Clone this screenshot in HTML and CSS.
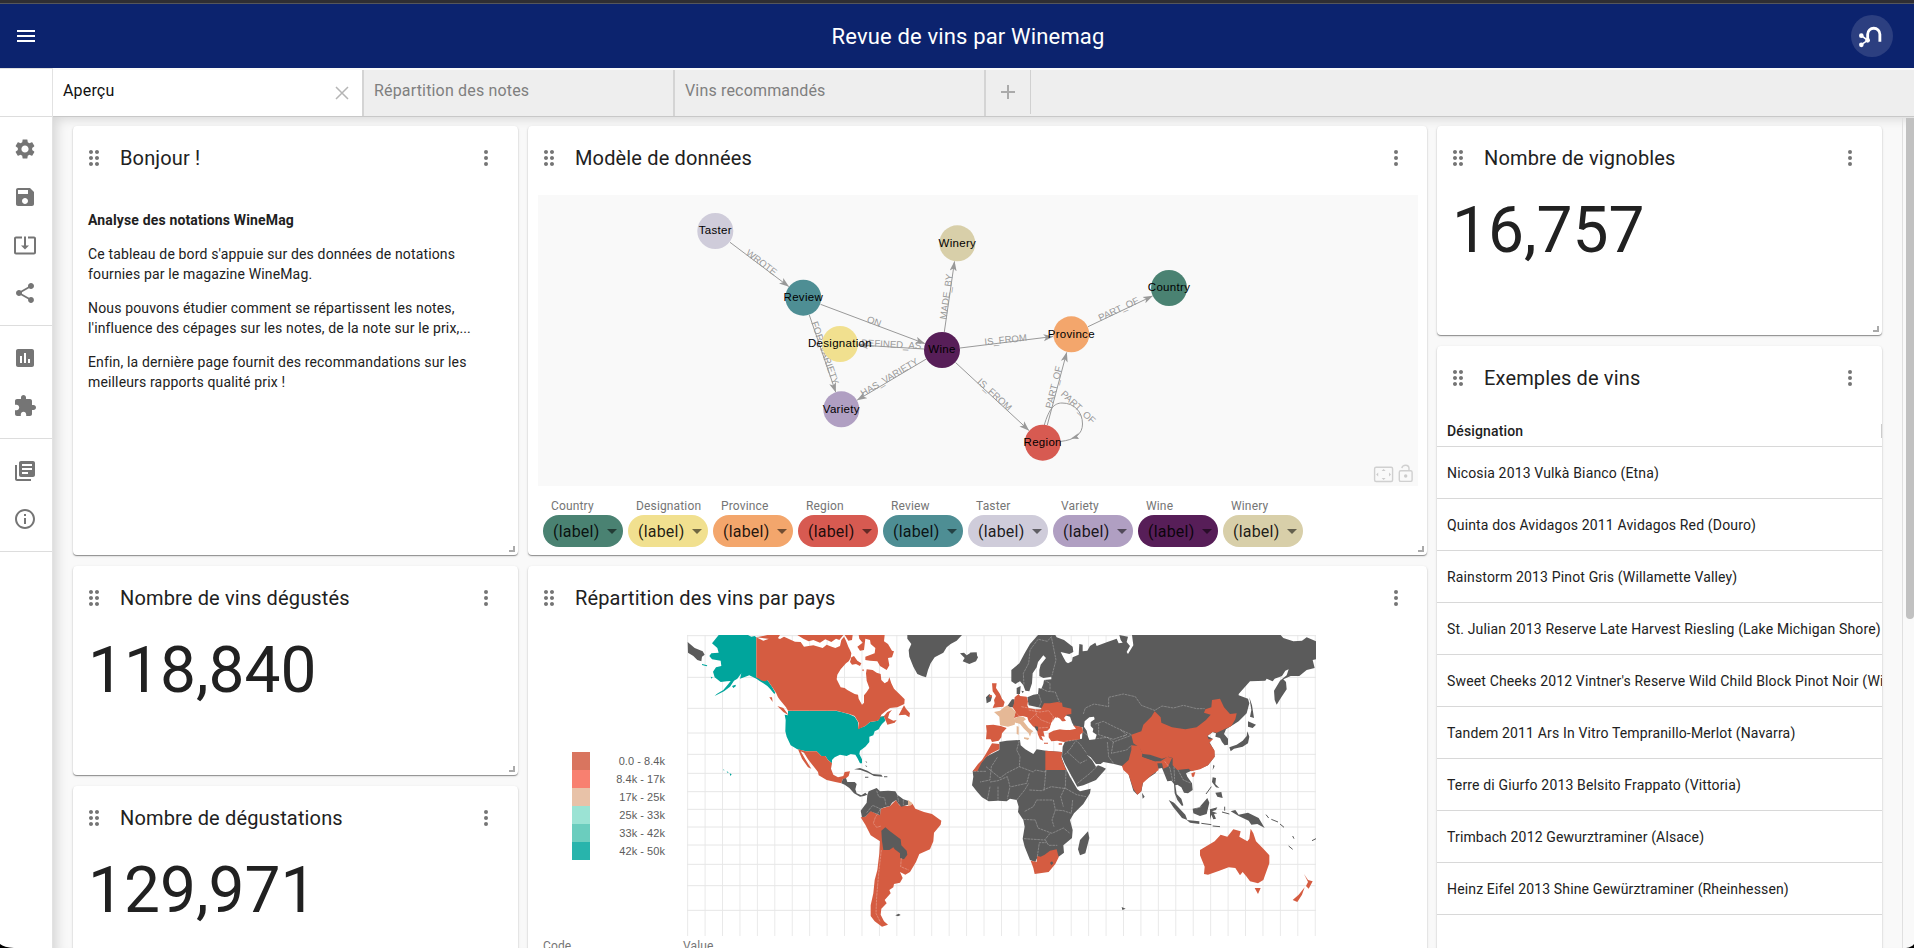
FILE: index.html
```html
<!DOCTYPE html>
<html lang="fr">
<head>
<meta charset="utf-8">
<title>Revue de vins par Winemag</title>
<link rel="stylesheet" href="styles.css">
</head>
<body>
<svg class="defs" width="0" height="0">
  <symbol id="drag" viewBox="0 0 24 24"><path d="M11 18c0 1.1-.9 2-2 2s-2-.9-2-2 .9-2 2-2 2 .9 2 2zm-2-8c-1.100 0-2 .9-2 2s.9 2 2 2 2-.9 2-2-.9-2-2-2zm0-6c-1.100 0-2 .9-2 2s.9 2 2 2 2-.9 2-2-.9-2-2-2zm6 4c1.100 0 2-.9 2-2s-.9-2-2-2-2 .9-2 2 .9 2 2 2zm0 2c-1.100 0-2 .9-2 2s.9 2 2 2 2-.9 2-2-.9-2-2-2zm0 6c-1.100 0-2 .9-2 2s.9 2 2 2 2-.9 2-2-.9-2-2-2z"/></symbol>
  <symbol id="more" viewBox="0 0 24 24"><circle cx="12" cy="6" r="2"/><circle cx="12" cy="12" r="2"/><circle cx="12" cy="18" r="2"/></symbol>
  <symbol id="caret" viewBox="0 0 24 24"><path d="M7 10l5 5 5-5z"/></symbol>
</svg>
<div class="window-edge"></div>
<header class="topbar">
  <svg class="burger" viewBox="0 0 24 24"><path d="M3 18h18v-2H3v2zm0-5h18v-2H3v2zm0-7v2h18V6H3z"/></svg>
  <h1 class="topbar-title">Revue de vins par Winemag</h1>
  <span class="logo"><svg viewBox="1293 45 126 126"><g fill="none" stroke="#fff"><path stroke-width="8.500" d="M1343 120V103a18.300 18.300 0 0 1 36.600 0V125"/><path stroke-width="5" d="M1324 107L1343 121L1324 134"/></g><g fill="#fff"><circle cx="1324" cy="107" r="7"/><circle cx="1343" cy="121" r="7"/><circle cx="1324" cy="134.500" r="7"/></g></svg></span>
</header>
<div class="shell">
  <aside class="side">
    <div class="side-head"></div>
    <nav class="side-group">
      <a class="side-btn"><svg viewBox="0 0 24 24"><path d="M19.140 12.940c.04-.3.060-.61.060-.94 0-.32-.02-.64-.07-.94l2.030-1.580c.18-.14.230-.41.120-.61l-1.920-3.320c-.12-.22-.37-.29-.59-.22l-2.390.96c-.5-.38-1.030-.7-1.620-.94l-.36-2.540c-.04-.24-.24-.41-.48-.41h-3.840c-.24 0-.43.170-.47.410l-.36 2.540c-.59.240-1.130.570-1.620.940l-2.390-.96c-.22-.08-.47 0-.59.220L2.740 8.870c-.12.210-.08.470.120.610l2.030 1.580c-.05.3-.09.630-.09.940s.02.640.070.940l-2.030 1.580c-.18.140-.23.410-.12.610l1.920 3.320c.12.220.370.290.590.220l2.390-.96c.5.380 1.030.7 1.620.940l.36 2.540c.05.240.240.410.480.410h3.840c.24 0 .44-.17.470-.41l.36-2.540c.59-.24 1.130-.56 1.620-.94l2.390.96c.22.080.470 0 .59-.22l1.920-3.320c.12-.22.070-.47-.12-.61l-2.010-1.580zM12 15.600c-1.980 0-3.600-1.620-3.600-3.600s1.620-3.600 3.600-3.600 3.600 1.620 3.600 3.600-1.620 3.600-3.600 3.600z"/></svg></a>
      <a class="side-btn"><svg viewBox="0 0 24 24"><path d="M17 3H5c-1.110 0-2 .9-2 2v14c0 1.100.890 2 2 2h14c1.100 0 2-.9 2-2V7l-4-4zm-5 16c-1.660 0-3-1.340-3-3s1.340-3 3-3 3 1.340 3 3-1.340 3-3 3zm3-10H5V5h10v4z"/></svg></a>
      <a class="side-btn"><svg viewBox="0 0 24 24"><path d="M12 16.500l4-4h-3v-9h-2v9H8l4 4zm9-13h-6v1.990h6v14.030H3V5.490h6V3.500H3c-1.100 0-2 .9-2 2v14c0 1.100.9 2 2 2h18c1.100 0 2-.9 2-2v-14c0-1.100-.9-2-2-2z"/></svg></a>
      <a class="side-btn"><svg viewBox="0 0 24 24"><path d="M18 16.080c-.76 0-1.440.3-1.960.770L8.910 12.700c.05-.23.090-.46.090-.7s-.04-.47-.09-.7l7.050-4.110c.54.5 1.250.810 2.040.810 1.660 0 3-1.340 3-3s-1.340-3-3-3-3 1.340-3 3c0 .24.040.470.090.7L8.040 9.810C7.500 9.310 6.790 9 6 9c-1.660 0-3 1.340-3 3s1.340 3 3 3c.79 0 1.500-.31 2.040-.81l7.120 4.160c-.05.210-.08.430-.08.650 0 1.610 1.310 2.920 2.920 2.920s2.920-1.310 2.920-2.920-1.310-2.920-2.920-2.920z"/></svg></a>
    </nav>
    <nav class="side-group">
      <a class="side-btn"><svg viewBox="0 0 24 24"><path d="M19 3H5c-1.100 0-2 .9-2 2v14c0 1.100.9 2 2 2h14c1.100 0 2-.9 2-2V5c0-1.100-.9-2-2-2zM9 17H7v-7h2v7zm4 0h-2V7h2v10zm4 0h-2v-4h2v4z"/></svg></a>
      <a class="side-btn"><svg viewBox="0 0 24 24"><path d="M20.500 11H19V7c0-1.100-.9-2-2-2h-4V3.500C13 2.120 11.880 1 10.500 1S8 2.120 8 3.500V5H4c-1.100 0-1.990.9-1.990 2v3.800H3.500c1.490 0 2.700 1.210 2.700 2.700s-1.210 2.700-2.700 2.700H2V20c0 1.100.9 2 2 2h3.800v-1.500c0-1.490 1.210-2.700 2.700-2.700 1.490 0 2.700 1.210 2.700 2.700V22H17c1.100 0 2-.9 2-2v-4h1.500c1.380 0 2.500-1.120 2.500-2.500S21.880 11 20.500 11z"/></svg></a>
    </nav>
    <nav class="side-group">
      <a class="side-btn"><svg viewBox="0 0 24 24"><path d="M4 6H2v14c0 1.100.9 2 2 2h14v-2H4V6zm16-4H8c-1.100 0-2 .9-2 2v12c0 1.100.9 2 2 2h12c1.100 0 2-.9 2-2V4c0-1.100-.9-2-2-2zm-1 9H9V9h10v2zm-4 4H9v-2h6v2zm4-8H9V5h10v2z"/></svg></a>
      <a class="side-btn"><svg viewBox="0 0 24 24"><path d="M11 7h2v2h-2zm0 4h2v6h-2zm1-9C6.480 2 2 6.480 2 12s4.480 10 10 10 10-4.480 10-10S17.520 2 12 2zm0 18c-4.410 0-8-3.590-8-8s3.590-8 8-8 8 3.590 8 8-3.590 8-8 8z"/></svg></a>
    </nav>
  </aside>
  <div class="main">
    <div class="tabs">
      <div class="tab tab-active"><span>Aperçu</span><svg class="tab-close" viewBox="0 0 14 14"><path d="M1 1L13 13M13 1L1 13"/></svg></div>
      <div class="tab"><span>Répartition des notes</span></div>
      <div class="tab"><span>Vins recommandés</span></div>
      <div class="tab-add"><svg viewBox="0 0 14 14"><path d="M7 0V14M0 7H14"/></svg></div>
    </div>
    <div class="page">
      <main class="board">
        <section class="card rows-2">
          <div class="card-head"><svg class="drag"><use href="#drag"/></svg><h2>Bonjour !</h2><svg class="more"><use href="#more"/></svg></div>
          <div class="prose">
            <p><strong>Analyse des notations WineMag</strong></p>
            <p>Ce tableau de bord s'appuie sur des données de notations<br>fournies par le magazine WineMag.</p>
            <p>Nous pouvons étudier comment se répartissent les notes,<br>l'influence des cépages sur les notes, de la note sur le prix,...</p>
            <p>Enfin, la dernière page fournit des recommandations sur les<br>meilleurs rapports qualité prix !</p>
          </div>
          <i class="grip"></i>
        </section>
        <section class="card rows-2 col-mid">
          <div class="card-head"><svg class="drag"><use href="#drag"/></svg><h2>Modèle de données</h2><svg class="more"><use href="#more"/></svg></div>
          <svg class="graph" viewBox="538 195 880 291">
            <defs><marker id="tip" viewBox="0 0 10 8" refX="9.500" refY="4" markerWidth="10" markerHeight="8" markerUnits="userSpaceOnUse" orient="auto"><path d="M0 .5L10 4L0 7.500L2.500 4Z" fill="#999"/></marker></defs>
            <g class="edges">
              <path marker-end="url(#tip)" d="M730 242.300L788.700 286.500"/>
              <path marker-end="url(#tip)" d="M820.500 304.300L924.700 343.500"/>
              <path marker-end="url(#tip)" d="M809.300 315L835.700 392"/>
              <path marker-end="url(#tip)" d="M924 349L858.500 345"/>
              <path marker-end="url(#tip)" d="M926.300 359L857.300 400"/>
              <path marker-end="url(#tip)" d="M944.300 332L954.500 261.500"/>
              <path marker-end="url(#tip)" d="M960 348L1053 336.500"/>
              <path marker-end="url(#tip)" d="M955.500 362.500L1028.800 430.300"/>
              <path marker-end="url(#tip)" d="M1047.300 425L1066.700 352.500"/>
              <path marker-end="url(#tip)" d="M1088 326.700L1152.500 296"/>
              <path d="M1044.300 425C1049 409 1054 403 1062 403C1074 403 1082.500 411.500 1082.500 424C1082.500 434 1075 440 1060 441.500"/>
            </g>
            <path d="M1071 438.500L1079.300 432.500L1076.800 436L1079 439Z" fill="#999"/>
            <g class="edge-labels">
              <text transform="translate(759.500 265) rotate(37)">WROTE</text>
              <text transform="translate(873 324.500) rotate(20)">ON</text>
              <text transform="translate(822 354) rotate(71)">FOR_VARIETY</text>
              <text transform="translate(891 347.500) rotate(3)">DEFINED_AS</text>
              <text transform="translate(891 380) rotate(-31)">HAS_VARIETY</text>
              <text transform="translate(949.500 297) rotate(-82)">MADE_BY</text>
              <text transform="translate(1006 343) rotate(-6)">IS_FROM</text>
              <text transform="translate(992.500 397) rotate(42.500)">IS_FROM</text>
              <text transform="translate(1057 388) rotate(-76)">PART_OF</text>
              <text transform="translate(1120 312) rotate(-25)">PART_OF</text>
              <text transform="translate(1076 409.500) rotate(43)">PART_OF</text>
            </g>
            <circle cx="715.300" cy="231" r="18" fill="#cfccda"/>
            <circle cx="803.300" cy="297.700" r="18" fill="#4e8e94"/>
            <circle cx="840" cy="344" r="18" fill="#f1e08f"/>
            <circle cx="841.300" cy="409.300" r="18" fill="#b09fc2"/>
            <circle cx="942" cy="350" r="18" fill="#571e58"/>
            <circle cx="957.300" cy="243.300" r="18" fill="#d8cfa9"/>
            <circle cx="1071.300" cy="334.300" r="18" fill="#f3a66c"/>
            <circle cx="1169" cy="288" r="18" fill="#4a8272"/>
            <circle cx="1042.700" cy="442.700" r="18" fill="#d75a51"/>
            <g class="node-labels">
              <text x="715.300" y="234.300">Taster</text>
              <text x="803.300" y="301.200">Review</text>
              <text x="840" y="347.300">Designation</text>
              <text x="841.300" y="413">Variety</text>
              <text x="942" y="353.300">Wine</text>
              <text x="957.300" y="247.200">Winery</text>
              <text x="1071.300" y="338.300">Province</text>
              <text x="1169" y="291.200">Country</text>
              <text x="1042.700" y="446.300">Region</text>
            </g>
            <g class="graph-tools">
              <rect x="1374.600" y="467.200" width="18" height="14.300" rx="1.500"/>
              <rect x="1399.300" y="470.800" width="12.800" height="10.600" rx="1.500"/>
              <path d="M1401.800 468.200C1402.500 464.300 1409 464 1409 468.500V470.500"/>
              <path class="solid" d="M1383.600 469l2 2h-4zM1383.600 480l2-2h-4zM1376.200 474.400l2-2v4zM1391 474.400l-2-2v4z"/>
              <circle class="solid" cx="1405.700" cy="476" r="1.700"/>
            </g>
          </svg>
          <div class="chips">
            <div class="chip-field"><label>Country</label><span class="chip chip-country">(label)<svg><use href="#caret"/></svg></span></div>
            <div class="chip-field"><label>Designation</label><span class="chip chip-designation">(label)<svg><use href="#caret"/></svg></span></div>
            <div class="chip-field"><label>Province</label><span class="chip chip-province">(label)<svg><use href="#caret"/></svg></span></div>
            <div class="chip-field"><label>Region</label><span class="chip chip-region">(label)<svg><use href="#caret"/></svg></span></div>
            <div class="chip-field"><label>Review</label><span class="chip chip-review">(label)<svg><use href="#caret"/></svg></span></div>
            <div class="chip-field"><label>Taster</label><span class="chip chip-taster">(label)<svg><use href="#caret"/></svg></span></div>
            <div class="chip-field"><label>Variety</label><span class="chip chip-variety">(label)<svg><use href="#caret"/></svg></span></div>
            <div class="chip-field"><label>Wine</label><span class="chip chip-wine">(label)<svg><use href="#caret"/></svg></span></div>
            <div class="chip-field"><label>Winery</label><span class="chip chip-winery">(label)<svg><use href="#caret"/></svg></span></div>
          </div>
          <i class="grip"></i>
        </section>
        <section class="card">
          <div class="card-head"><svg class="drag"><use href="#drag"/></svg><h2>Nombre de vignobles</h2><svg class="more"><use href="#more"/></svg></div>
          <div class="figure">16,757</div>
          <i class="grip"></i>
        </section>
        <section class="card rows-4 col-right">
          <div class="card-head"><svg class="drag"><use href="#drag"/></svg><h2>Exemples de vins</h2><svg class="more"><use href="#more"/></svg></div>
          <div class="table">
            <div class="tr th"><span>Désignation</span><i></i></div>
            <div class="tr">Nicosia 2013 Vulkà Bianco (Etna)</div>
            <div class="tr">Quinta dos Avidagos 2011 Avidagos Red (Douro)</div>
            <div class="tr">Rainstorm 2013 Pinot Gris (Willamette Valley)</div>
            <div class="tr">St. Julian 2013 Reserve Late Harvest Riesling (Lake Michigan Shore)</div>
            <div class="tr">Sweet Cheeks 2012 Vintner's Reserve Wild Child Block Pinot Noir (Willamette Valley)</div>
            <div class="tr">Tandem 2011 Ars In Vitro Tempranillo-Merlot (Navarra)</div>
            <div class="tr">Terre di Giurfo 2013 Belsito Frappato (Vittoria)</div>
            <div class="tr">Trimbach 2012 Gewurztraminer (Alsace)</div>
            <div class="tr">Heinz Eifel 2013 Shine Gewürztraminer (Rheinhessen)</div>
          </div>
        </section>
        <section class="card col-left">
          <div class="card-head"><svg class="drag"><use href="#drag"/></svg><h2>Nombre de vins dégustés</h2><svg class="more"><use href="#more"/></svg></div>
          <div class="figure">118,840</div>
          <i class="grip"></i>
        </section>
        <section class="card rows-2 col-mid">
          <div class="card-head"><svg class="drag"><use href="#drag"/></svg><h2>Répartition des vins par pays</h2><svg class="more"><use href="#more"/></svg></div>
          <div class="map-row">
            <ul class="legend">
              <li><i class="sw sw-1"></i>0.0 - 8.4k</li>
              <li><i class="sw sw-2"></i>8.4k - 17k</li>
              <li><i class="sw sw-3"></i>17k - 25k</li>
              <li><i class="sw sw-4"></i>25k - 33k</li>
              <li><i class="sw sw-5"></i>33k - 42k</li>
              <li><i class="sw sw-6"></i>42k - 50k</li>
            </ul>
            <svg class="map" viewBox="0 0 1887 903">
              <defs><pattern id="meridians" x="0.500" y="0" width="52.300" height="903" patternUnits="userSpaceOnUse"><rect width="3" height="903" fill="#e9e9e9"/></pattern></defs>
              <rect width="1887" height="903" fill="url(#meridians)"/>
              <path class="parallels" d="M0 2H1887M0 127H1887M0 220H1887M0 294H1887M0 358H1887M0 415H1887M0 470H1887M0 523H1887M0 576H1887M0 630H1887M0 688H1887M0 752H1887M0 826H1887"/>
              <!-- Western hemisphere -->
              <g transform="translate(-21 -45)">
                <g class="high">
                  <path d="M116 45H204L214 50L224 48L229 52V172L250 178L262 180L276 200L286 218L283 222L270 206L262 198L250 190L240 184L229 176L208 166L192 172L180 176L184 160L172 176L162 182L150 200L132 214L104 228L110 222L130 210L145 192L152 183L140 184L122 186L104 172L99 155L108 142L124 138L122 122L96 118L88 108L94 100L116 98L112 84L96 70L104 60Z"/>
                  <path d="M324 273H470L484 276L508 283L524 290L534 306L534 326L556 318L570 306L594 302L600 290L612 288L616 302L606 312L600 320L596 328L584 334L580 346L568 350V366L556 380L540 392L538 402L546 418V430H540L532 414L526 404L512 402L500 408L480 404L464 412L456 420V430L444 420L436 408L424 408L410 394H378L352 388L332 376L320 350L316 334L317 300L314 284L324 286Z"/>
                  <path d="M66 132l16 4l-2 3l-14-4zM156 198l10-4l2 4l-8 6zM130 448l4 3h-4zM140 454l6 3l-3 2zM149 460l6 3l-4 5zM92 170l6 2l-3 4z"/>
                </g>
                <g class="low">
                  <path d="M229 52L250 62L284 50L300 57L312 50L345 65L362 66L372 80L400 76L428 84L440 74L455 80L466 84L480 78L484 60L492 50L498 62L505 80L510 90L514 100L512 114L506 124L498 130L482 148L472 164L470 178L482 202L494 204L502 210L524 222L534 224L536 236L546 254L552 248V226L560 216L568 204L560 182L558 160L560 148L578 150L590 158L602 162L604 180L614 190L624 184L628 172L634 190L642 206L662 226L674 238L673 252L652 262L630 264L614 276L604 284L600 294L612 288L622 276L636 270L628 280L624 294L640 302L650 300L644 308L622 314L618 304L612 290H604L594 302L570 306L556 318L534 328L536 308L524 288L508 282L484 276L470 272H324L318 262L300 240L294 232L288 218L276 200L262 180L256 184L246 182L229 172Z"/>
                  <path d="M229 52L262 45H300L290 60ZM352 45H490L478 60L468 56L454 66L436 58L420 68L400 60L386 64L370 56ZM494 45H518L516 60L505 62ZM536 45H614L612 64L624 72L636 92L642 94L636 112L624 114L628 136L620 150L600 138L592 124L570 122L556 120V110L584 100L586 84L572 72L570 60L556 56L552 90L540 92L532 80L548 68L538 56ZM514 112L522 108L532 122L544 130L540 138L528 132L516 134L510 126ZM672 256L656 286L676 284L688 292L690 280L678 266ZM292 258L310 264L326 286L310 276ZM268 232H276L278 246ZM545 150l6-2v6z"/>
                  <path d="M354 388L378 394H410L424 408H436L444 420L456 430L453 446L460 464L474 472L490 468L494 456L510 454L506 468L496 476L488 478L484 490L466 486L440 480L416 466L414 456L398 436L384 418L372 398L362 394L376 418L394 446L384 442L366 416Z"/>
                  <path d="M542 592L556 590L572 572L586 580L600 586L602 566L630 558L648 540L658 556L682 558L698 552L706 566L732 576L756 582L784 602L782 614L762 638L760 664L750 688L718 702L708 726L690 756L676 764L660 756L668 774L660 788L642 792L640 802L628 810L632 820L614 840L620 850L604 866L602 884L612 904L624 914L606 920L584 904L572 888V856L580 820L584 780L592 750L598 700L600 664L572 646L556 614Z"/>
                </g>
                <path class="mid" d="M684 540L698 550L690 558L682 554Z"/>
                <g class="none">
                  <path d="M23 66L44 84L68 94L74 104L66 110L64 124L52 120L40 108L24 98Z"/>
                  <path d="M484 490L488 478L498 474L502 486H524L530 492L526 508L530 520L544 526L556 518L562 524L552 528L540 530L522 520L508 504L494 494Z"/>
                  <path d="M522 448L540 444L562 452L578 462L604 464L608 470L582 468L564 458L542 450ZM555 470h10v3h-10zM612 469h10v3h-10zM556 424l6 2l-3 2zM556 434l6 6h-4z"/>
                  <path d="M562 524L566 514L590 504L600 514L624 512L646 514L652 524L670 538L684 542V554L664 560L654 550L648 540L636 548L630 558L614 562L602 566L600 586L586 580L572 574L556 590L546 592L542 572L560 548Z"/>
                  <path d="M604 632L616 622L628 632L644 644L662 658L664 676L680 692L682 704L672 718L660 714V700L644 688L640 682L628 690H610L606 664Z"/>
                  <path d="M682 45H846L830 62L812 72L800 82L790 98L764 112L752 130L744 150L738 172L726 168L712 162L700 140L688 110L686 90L694 72L682 56Z"/>
                  <path d="M840 100L852 98L860 106L872 98L884 98L894 112L888 124L868 132L848 124L854 114ZM646 886l10-5l6 4l-8 4z"/>
                </g>
                <path class="borders" d="M602 566L586 592L580 610L590 622L604 618M604 690L596 760L590 830L588 880L600 904M664 714L662 740L686 750M590 512L596 530L614 534L618 556M652 524L656 546M560 578L578 556L600 566M670 540V556"/>
              </g>
              <!-- Eastern hemisphere -->
              <g transform="translate(849 -45)">
                <g class="none">
                  <path d="M204 45L180 72L164 100L148 130L124 150V184L136 192L150 184L160 196L166 212L178 214L186 190L188 160L200 142L204 126L220 106L228 114L212 134L208 150V168L220 174L244 170V178L222 180L220 192L214 206L206 204L204 222L190 224L172 232L176 256L214 264L300 290L310 318L338 322L336 356L286 362L278 380L276 410L284 430L300 460L322 500L340 496L378 480L408 446L396 440L384 436L378 440L366 420L350 404L362 412L378 432L392 432L400 426L432 432L456 438L470 450L476 464L490 512L502 524L514 514L520 484L556 460L564 446L576 444L584 464L592 484L604 482L612 492L614 520L622 540L636 558L640 556L634 536L620 522L616 496L622 494L634 502L642 518L654 520L668 510L666 490L652 470L648 460L664 452L690 446L714 436L734 410L732 390L718 366L728 356L712 348L728 336L738 340L736 350L750 354L756 366L764 376L774 374V356L762 342L768 328L784 318L806 304L830 280L838 250L834 236L806 226V222L840 184L886 182L890 176L908 184L914 176L936 168L946 152L956 148L950 166L930 182L912 212L914 240L920 254L934 232L950 208L948 186L940 178L962 168H988L1010 150L1034 144L1028 120L1038 118V64L1010 52L996 62L970 64L940 54L932 45H486L490 76L474 102L470 96L480 78L470 66L474 50L448 45L452 60L458 68L446 70L440 56L412 66L380 78L376 68L360 78L352 92L338 94V74L328 72L326 104L308 112L306 124L294 130L288 126L280 112L272 96L298 102L310 96L308 80L282 60L260 52L256 45Z"/>
                  <path d="M48 232L58 222L66 230L62 244L50 250ZM140 204L152 198L150 222L140 222ZM112 258L126 238L134 238V262H118ZM0 98L20 97L22 112L0 126ZM154 212l8 2l-4 6z"/>
                  <path d="M88 366L110 362L150 360L152 376L166 388L190 402L200 388L228 392L276 396L274 412L286 442L300 470L322 508L330 514L362 506L360 520L340 552L312 580L300 600L308 630L306 654L280 676L282 698L266 710L200 716L196 726L180 720L164 680L158 656L164 620L160 600L144 576L146 560L140 540L120 536L110 544L84 542L56 544L36 532L22 516L6 496L10 470L8 454L48 410L88 390Z"/>
                  <path d="M354 634L358 654L346 700L330 706L324 688L330 660ZM516 518L524 530L518 536ZM730 434L734 438L728 450ZM838 232L846 256L852 294L840 290L844 270ZM834 304L858 314L848 324L834 320ZM832 334L838 350L834 370L818 380L792 386L782 394L778 382L800 374L818 362L830 348Z"/>
                  <path d="M728 472L738 474L736 492L748 504L738 502L726 486ZM736 518L754 516L758 534L742 530ZM596 540L612 548L646 584L652 600L636 594L610 562ZM650 600L688 604V612L660 608ZM668 566L688 562L712 534L718 548L710 582L690 588L670 580ZM720 568L742 562L738 570L726 574L742 580L732 582L738 596L730 598L724 584L720 600ZM782 574L796 570L806 584L834 578L866 594L884 624L862 612L844 614L836 602L806 588ZM455 861l12 5l-10 4z"/>
                  <path class="isles" d="M694 610L724 614M728 618L750 620M708 522L724 500M764 560V572M756 576L778 582M888 584L896 594M904 598L924 606M930 612L942 622M956 678L968 688M968 648L972 656M1026 662L1038 656"/>
                </g>
                <g class="low">
                  <path d="M66 190L80 190L78 204L90 222L96 236L104 246L100 260L84 262L68 264L74 250L72 240L78 228L68 214ZM58 224l8 2v6l-8 0z"/>
                  <path d="M134 232L146 222L150 228L170 230L174 244L172 256L176 264L196 268L212 268L216 262L222 250H240L262 246L276 248L278 260L304 266V282L290 284L282 294L288 302L274 306L268 296L256 292L248 302L244 310L240 324L232 332L220 334L224 350L214 348L220 362L210 358L204 344L200 328L188 318L176 304L172 292L158 288L144 290L132 294L136 274L128 262L132 250Z"/>
                  <path d="M236 340L250 332L270 328L300 330L318 326L310 316L336 322L340 336L330 344V358L300 362L282 366L262 362L244 364L236 352ZM266 370h10v4h-10zM222 368h12v3h-12z"/>
                  <path d="M48 316L70 314L92 318L110 324L96 340L94 352L86 362L66 366L62 358L48 358L50 334Z"/>
                  <path d="M66 370L88 372V388L64 400L48 412L34 430L22 454H8L24 432L36 420L46 404Z"/>
                  <path d="M226 392L276 396L274 412L278 424L288 450H226Z"/>
                  <path d="M182 722L200 726L202 708L212 710L224 704L240 692L260 688L266 712L256 732L236 756L194 762L190 744Z"/>
                  <path d="M484 344L514 334L520 314L544 290L554 274L572 292L574 308L606 322L646 328L680 322L708 300L722 284L702 278L706 268L724 262L726 240L750 236L762 262L780 282L800 280L796 298L784 318L766 326L740 338L728 336L712 348L716 358L730 356L718 368L734 392V410L714 436L690 448L664 454L656 446L622 450L608 436V414L596 410L576 416L540 404L518 402L508 382L490 370ZM664 460l12-4l-4 14l-6 0z"/>
                  <path d="M456 438L476 420L484 390V376L508 378L518 402L516 410L554 424L572 424L592 410L606 414L594 440L580 446L576 430L562 430L566 450L544 466L518 490L514 514L502 524L490 506L476 464L460 450Z"/>
                  <path d="M690 690L734 664L752 644L772 650L790 628L812 634L808 650L832 664L838 656L842 626L850 640L858 664L880 686L898 706V730L880 780L864 790L840 784L830 770L818 756L810 766L796 744L776 742L748 752L714 764L702 762L704 740L690 706ZM854 804H872L864 822ZM1002 762L1014 780L1028 784L1016 806L1008 798L1014 786ZM1004 802L996 824L982 846L968 840L986 824Z"/>
                </g>
                <g class="mid">
                  <path d="M72 276L90 272L102 262L112 256L128 266L138 276L132 290L136 304L134 314L114 320L90 316L88 290Z"/>
                  <path d="M132 296L144 290H160L168 298L160 304L176 324L190 334L184 338L180 350L176 340L162 326L150 312L136 308ZM162 352L178 354L174 360L162 356ZM140 318L146 320V344L140 342Z"/>
                </g>
                <path class="sea" d="M240 324L244 308L256 300L262 292L270 296L276 304L288 306L296 300L310 314L312 326L290 330L262 326L246 332ZM344 304L358 292L372 290L374 298L362 306V318L370 326L368 336L380 344L376 358L358 360L354 350L350 332L342 320Z"/>
                <path class="none" d="M194 318L204 320V334L198 330ZM516 402L554 416L572 418L556 424L518 410ZM240 728l6-4l4 6l-6 6z"/>
                <path class="borders" d="M204 58L180 90L176 130L160 160L162 196M206 58L232 64L244 50L250 80L258 120L246 166M148 362L140 390L150 410L148 440L190 456L196 450L226 456V450M48 440L90 474L112 458L148 440M82 412L64 440L60 480L30 486M60 486L84 482L112 470L120 500L112 536M84 500V542M60 500L52 540M124 500L170 490L178 460M140 540L164 510L176 490M178 510L214 512L244 500L288 506M164 574L190 560L200 540L250 540L256 570L246 600L252 620M160 598L196 600L204 624L246 640L280 624L300 640M162 656L224 660L240 640M226 660L236 676L262 676M202 710L208 668L230 668M288 450L286 500L272 530L280 560M288 506L320 524L348 530M308 540L304 580L280 572L256 570M228 450L222 512M10 454H48M340 282L346 264L372 252L416 260L416 232L460 222L496 230L514 256L556 272M556 270L576 258L610 264L640 256L680 266L704 266M376 312L400 304L436 322L484 344M386 310V344L430 358L470 344M380 356L412 352L430 366L484 346M412 366L416 410L432 432M430 366L424 400L470 390L484 376M286 364L316 360L330 372L350 400M284 404L300 388L316 364M292 396L330 430L350 420M322 490L360 460L384 436M216 206L232 214L256 216L268 246M206 222L214 246L206 264M222 180L240 190L240 212M612 440L614 484M624 450L640 480L664 490M584 424L600 444L608 484M694 560L676 566M154 260L176 264M150 290L140 280M176 270L210 276L236 272L250 290L246 308M180 300L196 284L214 300L240 310M196 268L200 284M206 324L236 322M338 334L354 348M452 330L470 344L460 350"/>
              </g>
            </svg>
          </div>
          <div class="map-fields"><span>Code</span><span>Value</span></div>
        </section>
        <section class="card col-left">
          <div class="card-head"><svg class="drag"><use href="#drag"/></svg><h2>Nombre de dégustations</h2><svg class="more"><use href="#more"/></svg></div>
          <div class="figure">129,971</div>
        </section>
      </main>
      <div class="scrollbar"><i></i></div>
    </div>
  </div>
</div>
<svg class="corner corner-left" viewBox="0 0 14 4"><path d="M0 0Q4 3.500 14 4H0Z"/></svg>
<svg class="corner corner-right" viewBox="0 0 8 4"><path d="M8 0Q6 3 0 4H8Z"/></svg>
</body>
</html>
```

FILE: styles.css
```css
* { box-sizing: border-box; }
html, body { height: 100%; }
body { margin: 0; height: 948px; display: flex; flex-direction: column; overflow: hidden; background: #fff; color: #212121; font-family: Roboto, "Liberation Sans", sans-serif; }
h1, h2, p, ul { margin: 0; padding: 0; font-weight: 400; }
.defs { position: absolute; }
.window-edge { flex: 0 0 4px; background: #2f2e33; border-bottom: 1px solid #55565b; }
.topbar { flex: 0 0 64px; display: grid; grid-template-columns: 100px 1fr 100px; align-items: center; background: #0c236e; color: #fff; }
.burger { width: 24px; height: 24px; margin-left: 14px; fill: #fff; }
.topbar-title { text-align: center; font-size: 22px; letter-spacing: .16px; padding-left: 22px; }
.logo { width: 42px; height: 42px; border-radius: 50%; background: #2c3f80; margin-left: 37px; }
.logo svg { display: block; width: 42px; height: 42px; }
.shell { flex: 1; display: flex; min-height: 0; }
.side { flex: 0 0 52px; background: #fff; position: relative; z-index: 2; box-shadow: 1px 0 0 #e2e2e2; }
.side-head { height: 49px; border-top: 1px solid #e0e0e0; border-bottom: 1px solid #ddd; }
.side-group { padding: 8px 0; border-bottom: 1px solid #ddd; }
.side-btn { display: flex; height: 48px; align-items: center; justify-content: center; padding-right: 2px; }
.side-btn svg { width: 24px; height: 24px; fill: #757575; }
.main { flex: 1; display: flex; flex-direction: column; min-width: 0; }
.tabs { flex: 0 0 49px; display: flex; padding-top: 2px; padding-left: 1px; background: #eee; border-bottom: 1px solid #c8c8c8; box-shadow: inset 0 2px #fafafa; }
.tab { width: 311px; padding: 0 13px 6px 10px; border-right: 2px solid #d4d4d4; display: flex; align-items: center; justify-content: space-between; font-size: 16px; letter-spacing: .17px; color: #7f7f7f; }
.tab-active { background: #fff; color: #111; }
.tab-close { width: 14px; height: 14px; margin-top: 5px; fill: none; stroke: #b5b5b5; stroke-width: 1.500; }
.tab-add { width: 45px; height: 44px; border-right: 1px solid #d0d0d0; display: flex; align-items: center; justify-content: center; }
.tab-add svg { width: 14px; height: 14px; fill: none; stroke: #aaa; stroke-width: 2; }
.page { flex: 1; min-height: 0; display: flex; background: #f9f9f9; box-shadow: inset 9px 6px 12px -4px rgba(0,0,0,.14); }
.board { flex: 0 0 1850px; padding: 9px 0 0 21px; display: grid; grid-template-columns: 445px 899px 445px; grid-auto-rows: 210px; gap: 10px; overflow: hidden; }
.card { position: relative; background: #fff; border-radius: 4px; margin-bottom: 1px; box-shadow: 0 1px 1px rgba(0,0,0,.38), 0 1px 3px rgba(0,0,0,.12); overflow: hidden; }
.rows-2 { grid-row: span 2; }
.rows-4 { grid-row: 2 / span 4; }
.col-left { grid-column: 1; }
.col-mid { grid-column: 2; }
.col-right { grid-column: 3; }
.card-head { height: 64px; display: flex; align-items: center; padding: 0 20px 0 9px; }
.col-mid .card-head { padding-right: 19px; }
.card-head svg { width: 24px; height: 24px; fill: #757575; }
.card-head h2 { flex: 1; margin-left: 14px; font-size: 20px; letter-spacing: .15px; line-height: 32px; }
.figure { padding: 1px 0 0 15px; font-size: 64px; line-height: 80px; }
.prose { padding: 20px 15px; font-size: 14px; line-height: 20px; letter-spacing: .15px; white-space: nowrap; }
.prose p { margin-bottom: 14px; }
.grip { position: absolute; right: 3px; bottom: 3px; width: 6px; height: 6px; border-right: 2px solid #aaa; border-bottom: 2px solid #aaa; }
.graph { display: block; width: 880px; height: 291px; margin: 5px 0 0 10px; background: #f9f9f9; }
.edges { fill: none; stroke: #999; stroke-width: 1; }
.edge-labels { font: 9.600px "Liberation Sans", sans-serif; fill: #999; text-anchor: middle; }
.node-labels { font: 11.500px "Liberation Sans", sans-serif; letter-spacing: .3px; fill: #000; text-anchor: middle; }
.graph-tools { fill: none; stroke: #d0d0d0; stroke-width: 1.400; }
.graph-tools .solid { fill: #ccc; stroke: none; }
.chips { display: flex; gap: 5px; padding: 13px 15px; }
.chip-field { width: 80px; }
.chip-field label { display: block; padding-left: 8px; font-size: 12px; line-height: 14px; letter-spacing: .15px; color: #757575; margin-bottom: 2px; }
.chip { display: flex; align-items: center; height: 32px; border-radius: 16px; padding-left: 10px; font-size: 16px; letter-spacing: .2px; color: rgba(0,0,0,.87); }
.chip svg { flex: none; width: 24px; height: 24px; margin-left: 1px; fill: rgba(0,0,0,.54); }
.chip-country { background: #4a8272; }
.chip-designation { background: #f1e08f; }
.chip-province { background: #f3a66c; }
.chip-region { background: #d75a51; }
.chip-review { background: #4e8e94; }
.chip-taster { background: #cfccda; }
.chip-variety { background: #b09fc2; }
.chip-wine { background: #571e58; }
.chip-winery { background: #d8cfa9; }
.table { font-size: 14px; letter-spacing: .15px; white-space: nowrap; }
.tr { height: 52px; padding-left: 10px; display: flex; align-items: center; border-bottom: 1px solid #d8d8d8; }
.th { height: 37px; padding: 6px 0 0 10px; font-weight: 500; justify-content: space-between; }
.th i { width: 1px; height: 14px; background: #ccc; }
.map-row { display: flex; margin-top: 5px; }
.legend { width: 159px; padding: 117px 22px 0 44px; list-style: none; font: 11px/18px "Liberation Sans", sans-serif; color: #5c5c5c; }
.legend li { display: flex; justify-content: space-between; white-space: nowrap; letter-spacing: .05px; }
.sw { width: 18px; height: 18px; }
.sw-1 { background: #d9755f; }
.sw-2 { background: #f88070; }
.sw-3 { background: #e8c2a8; }
.sw-4 { background: #9be3d4; }
.sw-5 { background: #6bcdbe; }
.sw-6 { background: #28b4ac; }
.map { width: 629px; height: 301px; display: block; }
.parallels { stroke: #e6e6e6; stroke-width: 3; }
.high { fill: #00a59c; }
.low { fill: #d55c41; }
.mid { fill: #e5b896; }
.none { fill: #5b5b5b; }
.sea { fill: #fff; }
.isles { fill: none; stroke: #5b5b5b; stroke-width: 3; }
.borders { fill: none; stroke: #fff; stroke-opacity: .4; stroke-width: 2; stroke-dasharray: 8 2; }
.map-fields { display: flex; padding: 3px 15px; font-size: 12px; line-height: 14px; letter-spacing: .15px; color: #757575; }
.map-fields span { width: 140px; }
.scrollbar { flex: 1; display: flex; justify-content: flex-end; position: relative; padding-top: 1px; }
.scrollbar::before { content: ""; width: 1px; background: #e0e0e0; margin-right: 3px; }
.scrollbar i { width: 8px; height: 501px; background: #c1c1c1; border-radius: 0 0 4px 4px; }
.corner { position: absolute; bottom: 0; z-index: 5; }
.corner-left { left: 0; width: 14px; height: 4px; }
.corner-right { right: 0; width: 8px; height: 4px; }
```
